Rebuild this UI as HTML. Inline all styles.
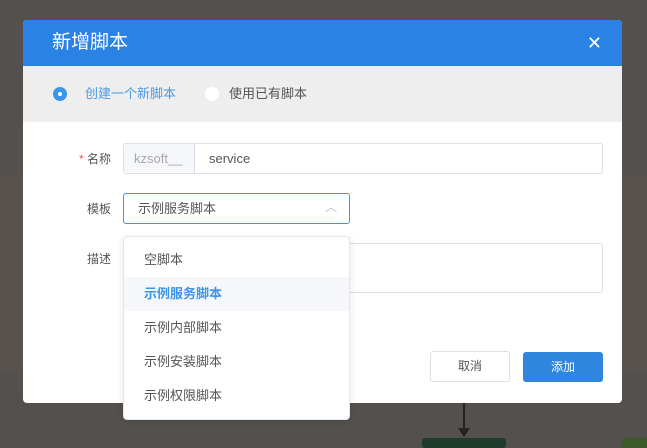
<!DOCTYPE html>
<html><head><meta charset="utf-8"><style>
*{box-sizing:border-box;margin:0;padding:0}
body{width:647px;height:445px;overflow:hidden;background:#54504e;font-family:"Liberation Sans","Noto Sans CJK SC",sans-serif;position:relative}
.band{position:absolute;left:0;top:175px;width:647px;height:199px;background:#58524f}
.dlg{position:absolute;left:23px;top:20px;width:599px;height:383px;background:#fff;border-radius:4px;overflow:hidden}
.hd{height:46px;background:#2a82e4;color:#fff;font-size:19px;line-height:46px;padding-left:29px;position:relative}
.x{position:absolute;right:20px;top:0;font-size:18px}
.rb{height:56px;background:#eee;font-size:13px;line-height:56px;padding-left:30px;color:#555;position:relative}
.r{position:absolute;top:21px;width:14px;height:14px;border-radius:50%}
.lab{position:absolute;font-size:12px;color:#555;text-align:right;width:60px}
.abs{position:absolute}
.dd div{height:34px;line-height:34px;padding-left:20px;font-size:13px;color:#555}
</style></head><body>
<div class="band"></div>
<div class="abs" style="left:463px;top:403px;width:2px;height:30px;background:#222"></div>
<div class="abs" style="left:458px;top:428px;border-left:6px solid transparent;border-right:6px solid transparent;border-top:9px solid #222"></div>
<div class="abs" style="left:422px;top:438px;width:84px;height:10px;background:#1f3b2b;border-radius:3px"></div>
<div class="abs" style="left:622px;top:438px;width:30px;height:10px;background:#3a5a2c;border-radius:3px"></div>
<div class="dlg">
<div class="hd">新增脚本<span class="x">✕</span></div>
<div class="rb">
<span class="r" style="left:30px;background:#3d95e8"><span style="position:absolute;left:5px;top:5px;width:4px;height:4px;background:#fff;border-radius:50%"></span></span>
<span style="position:absolute;left:62px;color:#4a9be6">创建一个新脚本</span>
<span class="r" style="left:182px;background:#fff"></span>
<span style="position:absolute;left:206px">使用已有脚本</span>
</div>
<div class="lab" style="left:28px;top:130px"><span style="color:#e55">*</span> 名称</div>
<div class="abs" style="left:100px;top:123px;width:480px;height:31px;border:1px solid #dcdfe6;border-radius:3px;font-size:13px;line-height:29px">
<span class="abs" style="left:0;top:0;width:71px;height:29px;background:#f5f7fa;border-right:1px solid #dcdfe6;color:#aaa;padding-left:10px">kzsoft__</span>
<span class="abs" style="left:85px;color:#555">service</span></div>
<div class="lab" style="left:28px;top:180px">模板</div>
<div class="abs" style="left:100px;top:173px;width:227px;height:31px;border:1px solid #3d95e8;border-radius:3px;font-size:13px;line-height:29px;padding-left:14px;color:#555">示例服务脚本<span class="abs" style="right:12px;top:-1px;color:#bbb;font-size:12px">︿</span></div>
<div class="lab" style="left:28px;top:230px">描述</div>
<div class="abs" style="left:100px;top:223px;width:480px;height:50px;border:1px solid #dcdfe6;border-radius:3px"></div>
<div class="abs" style="left:407px;top:331px;width:80px;height:31px;border:1px solid #dcdfe6;border-radius:3px;font-size:12px;text-align:center;line-height:29px;color:#555">取消</div>
<div class="abs" style="left:500px;top:332px;width:80px;height:30px;background:#2e86de;border-radius:3px;font-size:12px;text-align:center;line-height:30px;color:#fff">添加</div>
</div>
<div class="abs dd" style="left:123px;top:236px;width:227px;height:184px;background:#fff;border:1px solid #e4e7ed;border-radius:4px;padding-top:6px;box-shadow:0 2px 8px rgba(0,0,0,.1)">
<div>空脚本</div><div style="background:#f5f7fa;color:#3d95e8;font-weight:bold">示例服务脚本</div><div>示例内部脚本</div><div>示例安装脚本</div><div>示例权限脚本</div>
</div>
</body></html>
